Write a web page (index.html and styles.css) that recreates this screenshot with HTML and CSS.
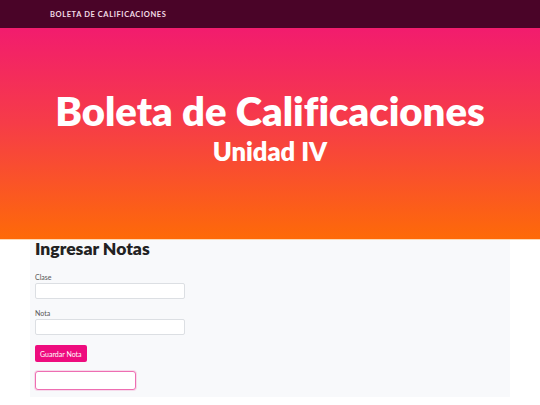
FILE: index.html
```html
<!DOCTYPE html>
<html lang="es">
<head>
<meta charset="utf-8">
<title>Boleta de Calificaciones</title>
<link rel="stylesheet" href="styles.css">
</head>
<body>
<nav class="navbar">
  <span class="brand">BOLETA DE CALIFICACIONES</span>
</nav>
<header class="hero">
  <h1 class="hero-title">Boleta de Calificaciones</h1>
  <h2 class="hero-sub">Unidad IV</h2>
</header>
<main class="card">
  <h3 class="card-title">Ingresar Notas</h3>
  <div class="field">
    <label class="label">Clase</label>
    <input class="input" type="text">
  </div>
  <div class="field">
    <label class="label">Nota</label>
    <input class="input" type="text">
  </div>
  <button class="btn">Guardar Nota</button>
  <div class="result"></div>
</main>
</body>
</html>
```
FILE: styles.css
```css
* { box-sizing: border-box; }
body {
  margin: 0;
  font-family: Lato, "Noto Sans", sans-serif;
  background: #ffffff;
  font-variant-ligatures: none;
}
.navbar {
  height: 28px;
  background: #4a0428;
  display: flex;
  align-items: center;
  padding-left: 50px;
}
.brand {
  color: #f3dce6;
  font-size: 7.5px;
  font-weight: 700;
  letter-spacing: 0.6px;
}
.hero {
  height: 212px;
  background: linear-gradient(180deg, #f21c6e 0%, #f63c48 45%, #fe6a08 100%);
  border-bottom: 1px solid #fdd9b4;
  display: flex;
  flex-direction: column;
  align-items: center;
  padding-top: 59px;
}
.hero-title {
  margin: 0;
  color: #fff;
  font-size: 40px;
  font-weight: 800;
  line-height: 48px;
}
.hero-sub {
  margin: 0;
  color: #fff;
  font-size: 25.5px;
  font-weight: 800;
  line-height: 32px;
}
.card {
  width: 480px;
  margin: 0 0 0 30px;
  background: #f8f9fb;
  padding: 0 5px 7px;
}
.card-title {
  margin: 0 0 15px;
  font-size: 17.5px;
  line-height: 18px;
  font-weight: 800;
  color: #222;
}
.field {
  display: flex;
  flex-direction: column;
  margin-bottom: 10px;
}
.label {
  font-size: 7px;
  color: #555;
  line-height: 8px;
  margin-bottom: 2px;
}
.input {
  width: 150px;
  height: 16px;
  border: 1px solid #dcdfe3;
  border-radius: 2px;
  background: #fff;
  padding: 0;
}
.btn {
  display: block;
  height: 17px;
  padding: 0 5px;
  background: #ee0c7e;
  color: #fff;
  border: none;
  border-radius: 2px;
  font-family: Lato, sans-serif;
  font-size: 7px;
}
.result {
  margin-top: 9px;
  width: 101px;
  height: 19px;
  border: 1px solid #ee6eb2;
  border-radius: 3px;
  background: #fff;
  box-shadow: 0 0 0 1px rgba(238, 12, 126, 0.12);
}
```
